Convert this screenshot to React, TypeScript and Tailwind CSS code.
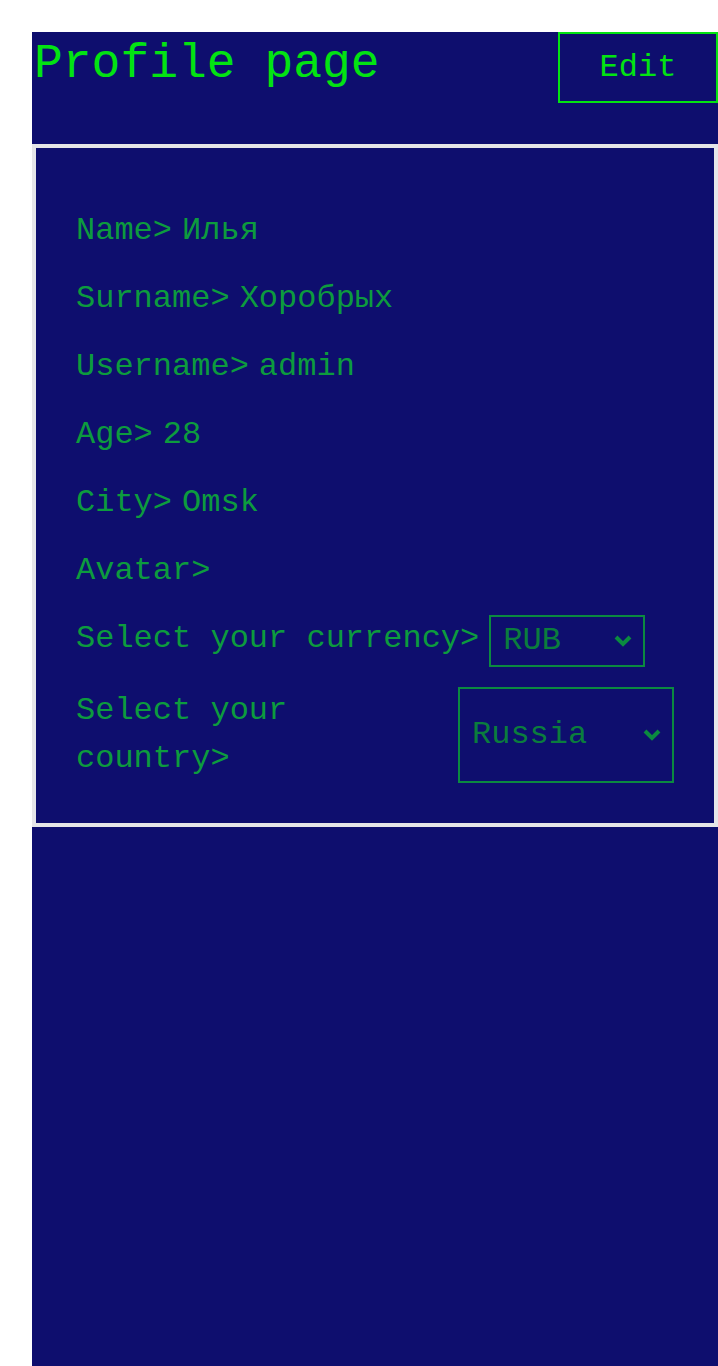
import React from "react";

const FONT = '"Courier New", Courier, "Nimbus Mono PS", "Nimbus Mono L", FreeMono, "Liberation Mono", monospace';

const Chevron = () => (
  <svg width="18" height="12" viewBox="0 0 18 12" className="pointer-events-none absolute right-[13px] top-1/2 -translate-y-1/2">
    <polyline points="2,2 9,9 16,2" fill="none" stroke="#0b8a40" strokeWidth="4" />
  </svg>
);

function Row({ label, value }: { label: string; value?: string }) {
  return (
    <div className="flex gap-[10px] leading-[48px]">
      <span>{label}</span>
      {value ? <span>{value}</span> : null}
    </div>
  );
}

export default function App() {
  return (
    <div className="bg-white min-h-screen pl-8 pt-8" style={{ fontFamily: FONT }}>
      <div className="w-[686px] min-h-[1334px] bg-[#0e0e6e]">
        <div className="flex h-[112px] items-start justify-between">
          <h1 className="ml-[2px] mt-2 text-[48px] leading-[48px] text-[#03e312]">Profile page</h1>
          <button className="flex h-[71px] w-[160px] items-center justify-center border-2 border-[#03e312] text-[32px] leading-[48px] text-[#03e312]">
            Edit
          </button>
        </div>
        <div className="flex flex-col gap-5 border-4 border-[#e6e6e8] px-10 pb-10 pt-[59px] text-[32px] text-[#0d9b3e]">
          <Row label="Name>" value="Илья" />
          <Row label="Surname>" value="Хоробрых" />
          <Row label="Username>" value="admin" />
          <Row label="Age>" value="28" />
          <Row label="City>" value="Omsk" />
          <Row label="Avatar>" />
          <div className="flex gap-[10px] leading-[48px]">
            <span>Select your currency&gt;</span>
            <div className="relative flex w-[156px] h-[52px]">
              <select
                defaultValue="RUB"
                className="h-full w-full appearance-none border-2 border-[#0b8a40] bg-transparent pl-3 text-[32px] leading-[48px] text-[#0b7d3d] outline-none"
                style={{ fontFamily: FONT }}
              >
                <option value="RUB">RUB</option>
                <option value="USD">USD</option>
                <option value="EUR">EUR</option>
              </select>
              <Chevron />
            </div>
          </div>
          <div className="flex gap-[10px] leading-[48px]">
            <span className="flex-1">Select your country&gt;</span>
            <div className="relative flex w-[216px] shrink-0">
              <select
                defaultValue="Russia"
                className="h-full w-full appearance-none border-2 border-[#0b8a40] bg-transparent pl-3 text-[32px] leading-[48px] text-[#0b7d3d] outline-none"
                style={{ fontFamily: FONT }}
              >
                <option value="Russia">Russia</option>
                <option value="Belarus">Belarus</option>
                <option value="Kazakhstan">Kazakhstan</option>
              </select>
              <Chevron />
            </div>
          </div>
        </div>
      </div>
    </div>
  );
}
